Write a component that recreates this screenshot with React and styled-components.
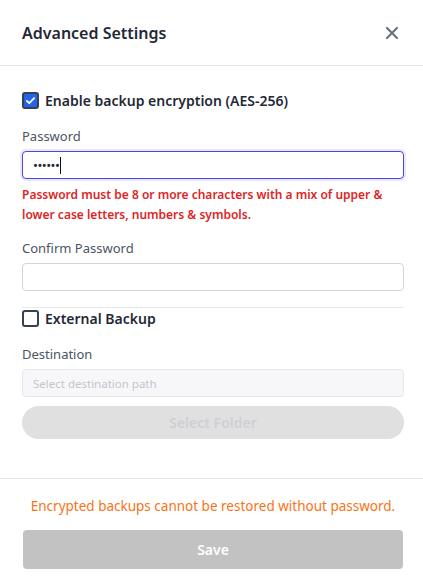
import React from 'react'
import styled, { createGlobalStyle } from 'styled-components'

const Global = createGlobalStyle`
  html, body { margin: 0; padding: 0; background: #fff; }
  body { font-family: "Noto Sans", "Open Sans", sans-serif; color: #1f2937; }
  * { box-sizing: border-box; }
`

const Panel = styled.div`
  width: 423px;
  height: 583px;
  display: flex;
  flex-direction: column;
  background: #fff;
`

const Header = styled.div`
  height: 66px;
  padding: 0 22px;
  display: flex;
  align-items: center;
  justify-content: space-between;
  border-bottom: 1px solid #e5e7eb;
`

const Title = styled.h2`
  margin: 0;
  font-size: 16px;
  font-weight: 600;
  color: #1f2937;
`

const Close = styled.button`
  border: 0;
  background: none;
  padding: 0;
  width: 16px;
  height: 16px;
  margin-right: 1px;
  color: #6b7280;
  display: flex;
`

const Body = styled.div`
  flex: 1;
  padding: 25px 19px 0 22px;
  display: flex;
  flex-direction: column;
`

const CheckRow = styled.label`
  display: flex;
  align-items: center;
  gap: 6px;
  font-size: 14px;
  font-weight: 600;
  color: #1f2937;
  height: 18px;
`

const Box = styled.span`
  width: 17px;
  height: 17px;
  border-radius: 3px;
  border: 2px solid #374151;
  background: ${p => (p.checked ? '#2563eb' : '#fff')};
  display: flex;
  align-items: center;
  justify-content: center;
`

const Label = styled.div`
  font-size: 13px;
  color: #4b5563;
  margin-top: ${p => p.top}px;
  margin-bottom: 6px;
`

const Input = styled.div`
  height: 28px;
  border-radius: 4px;
  border: 1px solid ${p => (p.focus ? '#4f46e5' : p.disabled ? '#e5e7eb' : '#d1d5db')};
  box-shadow: ${p => (p.focus ? '0 0 0 2px #e8e7fb' : 'none')};
  background: ${p => (p.disabled ? '#f7f7f9' : '#fff')};
  display: flex;
  align-items: center;
  padding: 0 10px;
  font-size: 11.5px;
  color: #c4c4cc;
`

const Dots = styled.span`
  font-size: 13px;
  letter-spacing: -0.5px;
  color: #1f2937;
  line-height: 1;
`

const Caret = styled.span`
  width: 1px;
  height: 17px;
  background: #111;
  margin-left: 1px;
`

const Error = styled.p`
  margin: 6px 0 0;
  font-size: 12px;
  font-weight: 600;
  line-height: 20px;
  color: #dc2626;
`

const Rule = styled.div`
  height: 1px;
  background: #e5e7eb;
  margin: 16px 0 1px;
`

const Pill = styled.div`
  margin-top: 9px;
  height: 33px;
  border-radius: 17px;
  background: #e0e0e0;
  display: flex;
  align-items: center;
  justify-content: center;
  font-size: 14px;
  font-weight: 600;
  color: #cfcfd5;
`

const Footer = styled.div`
  border-top: 1px solid #e5e7eb;
  padding: 17px 20px 14px 23px;
  display: flex;
  flex-direction: column;
  align-items: center;
`

const Warn = styled.p`
  margin: 0;
  font-size: 13.5px;
  color: #f97316;
  line-height: 20px;
`

const Save = styled.button`
  margin-top: 14px;
  width: 100%;
  height: 39px;
  border: 0;
  border-radius: 4px;
  background: #c2c2c2;
  color: #fff;
  font-family: inherit;
  font-size: 14px;
  font-weight: 600;
`

const Tick = () => (
  <svg width="11" height="11" viewBox="0 0 12 12" fill="none">
    <path d="M2 6.3l2.6 2.6L10 3.4" stroke="#fff" strokeWidth="2" strokeLinecap="round" strokeLinejoin="round" />
  </svg>
)

export default function App() {
  return (
    <Panel>
      <Global />
      <Header>
        <Title>Advanced Settings</Title>
        <Close aria-label="close">
          <svg width="16" height="16" viewBox="0 0 16 16">
            <path d="M3 3l10 10M13 3L3 13" stroke="currentColor" strokeWidth="2.2" strokeLinecap="round" />
          </svg>
        </Close>
      </Header>
      <Body>
        <CheckRow>
          <Box checked><Tick /></Box>
          Enable backup encryption (AES-256)
        </CheckRow>
        <Label top={18}>Password</Label>
        <Input focus>
          <Dots>••••••</Dots>
          <Caret />
        </Input>
        <Error>
          Password must be 8 or more characters with a mix of upper &amp; lower case letters, numbers &amp; symbols.
        </Error>
        <Label top={14}>Confirm Password</Label>
        <Input />
        <Rule />
        <CheckRow>
          <Box />
          External Backup
        </CheckRow>
        <Label top={18}>Destination</Label>
        <Input disabled>Select destination path</Input>
        <Pill>Select Folder</Pill>
      </Body>
      <Footer>
        <Warn>Encrypted backups cannot be restored without password.</Warn>
        <Save>Save</Save>
      </Footer>
    </Panel>
  )
}
